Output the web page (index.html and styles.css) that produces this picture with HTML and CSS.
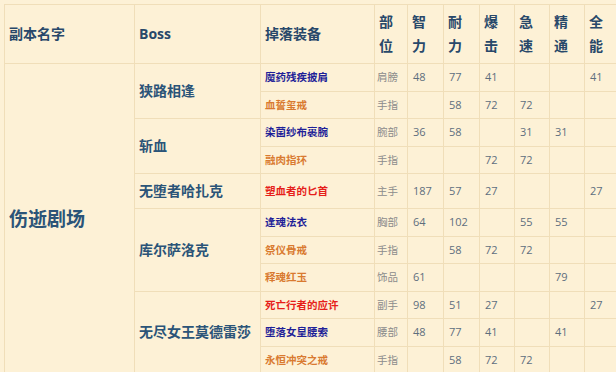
FILE: index.html
```html
<!DOCTYPE html>
<html lang="zh">
<head>
<meta charset="utf-8">
<link rel="stylesheet" href="styles.css">
</head>
<body>
<table class="loot">
  <colgroup>
    <col class="c-dungeon"><col class="c-boss"><col class="c-item"><col class="c-slot">
    <col class="c-stat"><col class="c-stat"><col class="c-stat2"><col class="c-stat2"><col class="c-stat2"><col class="c-stat">
  </colgroup>
  <thead>
    <tr>
      <th>副本名字</th><th>Boss</th><th>掉落装备</th>
      <th>部位</th><th>智力</th><th>耐力</th><th>爆击</th><th>急速</th><th>精通</th><th>全能</th>
    </tr>
  </thead>
  <tbody>
    <tr>
      <td class="dungeon" rowspan="11">伤逝剧场</td>
      <td class="boss" rowspan="2">狭路相逢</td>
      <td class="item epic">魔药残疾披肩</td><td class="slot">肩膀</td>
      <td class="num">48</td><td class="num">77</td><td class="num">41</td><td class="num"></td><td class="num"></td><td class="num">41</td>
    </tr>
    <tr>
      <td class="item orange">血誓玺戒</td><td class="slot">手指</td>
      <td class="num"></td><td class="num">58</td><td class="num">72</td><td class="num">72</td><td class="num"></td><td class="num"></td>
    </tr>
    <tr>
      <td class="boss" rowspan="2">斩血</td>
      <td class="item epic">染菌纱布裹腕</td><td class="slot">腕部</td>
      <td class="num">36</td><td class="num">58</td><td class="num"></td><td class="num">31</td><td class="num">31</td><td class="num"></td>
    </tr>
    <tr>
      <td class="item orange">融肉指环</td><td class="slot">手指</td>
      <td class="num"></td><td class="num"></td><td class="num">72</td><td class="num">72</td><td class="num"></td><td class="num"></td>
    </tr>
    <tr>
      <td class="boss">无堕者哈扎克</td>
      <td class="item red">塑血者的匕首</td><td class="slot">主手</td>
      <td class="num">187</td><td class="num">57</td><td class="num">27</td><td class="num"></td><td class="num"></td><td class="num">27</td>
    </tr>
    <tr>
      <td class="boss" rowspan="3">库尔萨洛克</td>
      <td class="item epic">逢魂法衣</td><td class="slot">胸部</td>
      <td class="num">64</td><td class="num">102</td><td class="num"></td><td class="num">55</td><td class="num">55</td><td class="num"></td>
    </tr>
    <tr>
      <td class="item orange">祭仪骨戒</td><td class="slot">手指</td>
      <td class="num"></td><td class="num">58</td><td class="num">72</td><td class="num">72</td><td class="num"></td><td class="num"></td>
    </tr>
    <tr>
      <td class="item orange">释魂红玉</td><td class="slot">饰品</td>
      <td class="num">61</td><td class="num"></td><td class="num"></td><td class="num"></td><td class="num">79</td><td class="num"></td>
    </tr>
    <tr>
      <td class="boss" rowspan="3">无尽女王莫德雷莎</td>
      <td class="item red">死亡行者的应许</td><td class="slot">副手</td>
      <td class="num">98</td><td class="num">51</td><td class="num">27</td><td class="num"></td><td class="num"></td><td class="num">27</td>
    </tr>
    <tr>
      <td class="item epic">堕落女皇腰索</td><td class="slot">腰部</td>
      <td class="num">48</td><td class="num">77</td><td class="num">41</td><td class="num"></td><td class="num">41</td><td class="num"></td>
    </tr>
    <tr>
      <td class="item orange">永恒冲突之戒</td><td class="slot">手指</td>
      <td class="num"></td><td class="num">58</td><td class="num">72</td><td class="num">72</td><td class="num"></td><td class="num"></td>
    </tr>
  </tbody>
</table>
</body>
</html>
```

FILE: styles.css
```css
html, body {
  margin: 0;
  padding: 0;
  overflow: hidden;
  background: #fdf1d6;
}

body {
  padding: 4px 0 0 4px;
  font-family: "Open Sans", "Noto Sans CJK SC", sans-serif;
}

.loot {
  border-collapse: collapse;
  table-layout: fixed;
  width: 616px;
  background: #fdf1d6;
}

.c-dungeon { width: 130px; }
.c-boss { width: 126px; }
.c-item { width: 114px; }
.c-slot { width: 33px; }
.c-stat { width: 36px; }
.c-stat2 { width: 35px; }

.loot th,
.loot td {
  border: 1px solid #f0deb9;
  padding: 4px 4px;
  line-height: 18.5px;
  text-align: left;
  vertical-align: middle;
}

.loot th {
  padding: 5px 4px;
  font-size: 14px;
  line-height: 24px;
  font-weight: bold;
  color: #28486a;
}

.loot td.dungeon {
  font-size: 19px;
  line-height: 28px;
  font-weight: bold;
  color: #2b5478;
}

.loot td.boss {
  font-size: 14px;
  line-height: 26px;
  font-weight: bold;
  color: #2b5478;
  white-space: nowrap;
}

.item {
  font-size: 10.5px;
  font-weight: bold;
  white-space: nowrap;
}

.epic { color: #1f1f98; }
.orange { color: #d97a30; }
.red { color: #e61e1a; }

.loot td.slot {
  padding: 4px 1px 4px 2px;
  font-size: 10.5px;
  color: #8c8c8c;
  white-space: nowrap;
}

.loot td.num {
  padding-left: 5px;
  font-size: 11px;
  color: #5d6e7e;
}
```
